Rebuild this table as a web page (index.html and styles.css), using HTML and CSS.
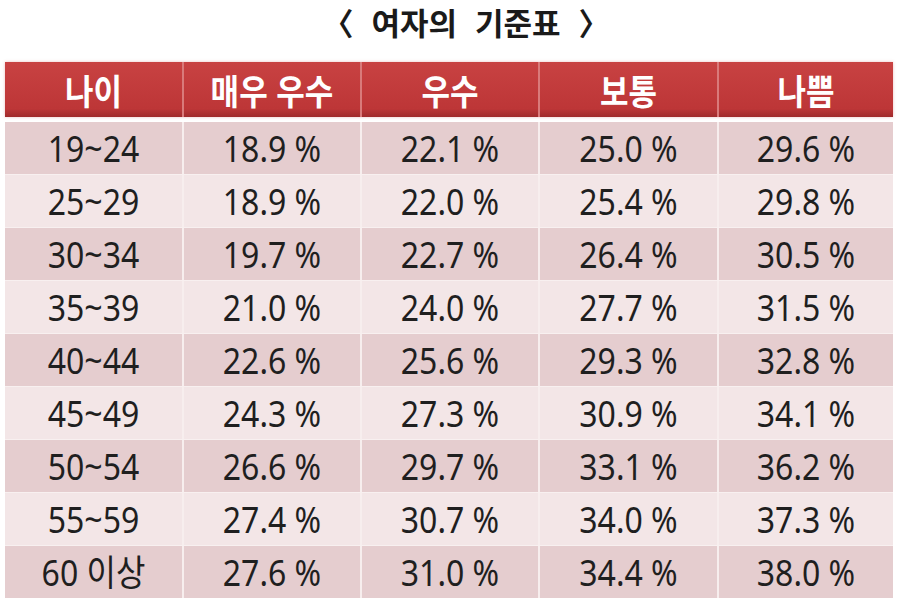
FILE: index.html
```html
<!DOCTYPE html>
<html lang="ko">
<head>
<meta charset="utf-8">
<link rel="stylesheet" href="styles.css">
</head>
<body>
<div class="page">
  <h1 class="title"><span>〈</span><span>여자의</span><span>기준표</span><span>〉</span></h1>
  <div class="table">
    <div class="row head">
      <div class="cell"><span class="t">나이</span></div><div class="cell"><span class="t">매우 우수</span></div><div class="cell"><span class="t">우수</span></div><div class="cell"><span class="t">보통</span></div><div class="cell"><span class="t">나쁨</span></div>
    </div>
    <div class="body">
      <div class="row dark"><div class="cell"><span class="t">19~24</span></div><div class="cell"><span class="t">18.9 %</span></div><div class="cell"><span class="t">22.1 %</span></div><div class="cell"><span class="t">25.0 %</span></div><div class="cell"><span class="t">29.6 %</span></div></div>
      <div class="row light"><div class="cell"><span class="t">25~29</span></div><div class="cell"><span class="t">18.9 %</span></div><div class="cell"><span class="t">22.0 %</span></div><div class="cell"><span class="t">25.4 %</span></div><div class="cell"><span class="t">29.8 %</span></div></div>
      <div class="row dark"><div class="cell"><span class="t">30~34</span></div><div class="cell"><span class="t">19.7 %</span></div><div class="cell"><span class="t">22.7 %</span></div><div class="cell"><span class="t">26.4 %</span></div><div class="cell"><span class="t">30.5 %</span></div></div>
      <div class="row light"><div class="cell"><span class="t">35~39</span></div><div class="cell"><span class="t">21.0 %</span></div><div class="cell"><span class="t">24.0 %</span></div><div class="cell"><span class="t">27.7 %</span></div><div class="cell"><span class="t">31.5 %</span></div></div>
      <div class="row dark"><div class="cell"><span class="t">40~44</span></div><div class="cell"><span class="t">22.6 %</span></div><div class="cell"><span class="t">25.6 %</span></div><div class="cell"><span class="t">29.3 %</span></div><div class="cell"><span class="t">32.8 %</span></div></div>
      <div class="row light"><div class="cell"><span class="t">45~49</span></div><div class="cell"><span class="t">24.3 %</span></div><div class="cell"><span class="t">27.3 %</span></div><div class="cell"><span class="t">30.9 %</span></div><div class="cell"><span class="t">34.1 %</span></div></div>
      <div class="row dark"><div class="cell"><span class="t">50~54</span></div><div class="cell"><span class="t">26.6 %</span></div><div class="cell"><span class="t">29.7 %</span></div><div class="cell"><span class="t">33.1 %</span></div><div class="cell"><span class="t">36.2 %</span></div></div>
      <div class="row light"><div class="cell"><span class="t">55~59</span></div><div class="cell"><span class="t">27.4 %</span></div><div class="cell"><span class="t">30.7 %</span></div><div class="cell"><span class="t">34.0 %</span></div><div class="cell"><span class="t">37.3 %</span></div></div>
      <div class="row dark"><div class="cell"><span class="t">60 이상</span></div><div class="cell"><span class="t">27.6 %</span></div><div class="cell"><span class="t">31.0 %</span></div><div class="cell"><span class="t">34.4 %</span></div><div class="cell"><span class="t">38.0 %</span></div></div>
    </div>
  </div>
</div>
</body>
</html>
```
FILE: styles.css
```css
html, body {
  margin: 0;
  padding: 0;
  background: #ffffff;
}

.page {
  width: 900px;
  height: 608px;
  padding: 0 7px 0 5px;
  box-sizing: border-box;
  font-family: "Noto Sans", "Noto Sans CJK KR", sans-serif;
  color: #1f1f1f;
}

.t {
  display: inline-block;
  transform: scaleY(1.13);
  white-space: pre;
}

.title {
  margin: 0;
  height: 62px;
  padding: 2px 0 0 34px;
  box-sizing: border-box;
  display: flex;
  justify-content: center;
  align-items: flex-start;
  gap: 18px;
  font-family: "Noto Sans CJK KR", sans-serif;
  font-size: 31px;
  line-height: 40px;
  font-weight: 700;
  color: #1a1a1a;
}

.table {
  display: flex;
  flex-direction: column;
  gap: 5px;
}

.row {
  display: grid;
  grid-template-columns: 177px 178px 178px 179px 176px;
}

.cell {
  display: flex;
  align-items: center;
  justify-content: center;
  border-left: 2px solid #f7eeee;
}

.cell:first-child {
  border-left: none;
}

.head {
  height: 55px;
  background: linear-gradient(#c84242, #bd3637 85%, #a02a2b);
  box-shadow: 0 0 3px rgba(200, 80, 80, 0.35);
}

.head .cell {
  color: #ffffff;
  font-family: "Noto Sans CJK KR", sans-serif;
  font-size: 31px;
  font-weight: 700;
  border-left-color: #d97a7a;
}

.body {
  display: flex;
  flex-direction: column;
  gap: 1px;
  background: #f8f0f0;
}

.body .row {
  height: 52px;
}

.body .cell {
  font-size: 32px;
  line-height: 1;
}

.dark {
  background: #e5cdcf;
}

.light {
  background: #f3e6e7;
}
```
